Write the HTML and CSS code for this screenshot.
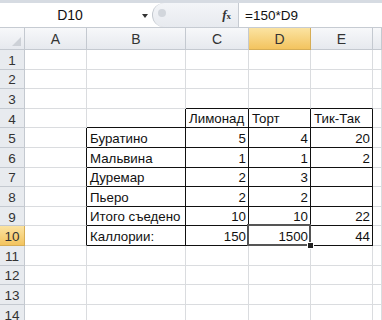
FILE: index.html
```html
<!DOCTYPE html>
<html lang="ru">
<head>
    <meta charset="UTF-8">
    <title>Книга1</title>
    <link rel="stylesheet" href="styles.css">
</head>
<body>

<div class="formula-bar">
    <div class="name-box">
        <span class="name">D10</span>
        <span class="arrow"></span>
    </div>
    <div class="fx-area">
        <span class="grip"></span>
        <span class="fx"><i>f</i><small>x</small></span>
    </div>
    <div class="formula">=150*D9</div>
</div>

<div class="sheet">
    <div class="hd corner"><span class="all"></span></div>
    <div class="hd">A</div>
    <div class="hd">B</div>
    <div class="hd">C</div>
    <div class="hd sel">D</div>
    <div class="hd">E</div>
    <div class="hd"></div>

    <div class="rh">1</div><div class="c"></div><div class="c"></div><div class="c"></div><div class="c"></div><div class="c"></div><div class="c"></div>
    <div class="rh">2</div><div class="c"></div><div class="c"></div><div class="c"></div><div class="c"></div><div class="c"></div><div class="c"></div>
    <div class="rh">3</div><div class="c"></div><div class="c"></div><div class="c bb"></div><div class="c bb"></div><div class="c bb"></div><div class="c"></div>

    <div class="rh">4</div><div class="c"></div><div class="c br bb"></div><div class="c br bb">Лимонад</div><div class="c br bb">Торт</div><div class="c br bb">Тик-Так</div><div class="c"></div>
    <div class="rh">5</div><div class="c br"></div><div class="c br bb">Буратино</div><div class="c br bb num">5</div><div class="c br bb num">4</div><div class="c br bb num">20</div><div class="c"></div>
    <div class="rh">6</div><div class="c br"></div><div class="c br bb">Мальвина</div><div class="c br bb num">1</div><div class="c br bb num">1</div><div class="c br bb num">2</div><div class="c"></div>
    <div class="rh">7</div><div class="c br"></div><div class="c br bb">Дуремар</div><div class="c br bb num">2</div><div class="c br bb num">3</div><div class="c br bb"></div><div class="c"></div>
    <div class="rh">8</div><div class="c br"></div><div class="c br bb">Пьеро</div><div class="c br bb num">2</div><div class="c br bb num">2</div><div class="c br bb"></div><div class="c"></div>
    <div class="rh">9</div><div class="c br"></div><div class="c br bb">Итого съедено</div><div class="c br bb num">10</div><div class="c br bb num">10</div><div class="c br bb num">22</div><div class="c"></div>
    <div class="rh sel">10</div><div class="c br"></div><div class="c br bb">Каллории:</div><div class="c br bb num">150</div><div class="c br bb num active">1500<span class="handle"></span></div><div class="c br bb num">44</div><div class="c"></div>

    <div class="rh">11</div><div class="c"></div><div class="c"></div><div class="c"></div><div class="c"></div><div class="c"></div><div class="c"></div>
    <div class="rh">12</div><div class="c"></div><div class="c"></div><div class="c"></div><div class="c"></div><div class="c"></div><div class="c"></div>
    <div class="rh">13</div><div class="c"></div><div class="c"></div><div class="c"></div><div class="c"></div><div class="c"></div><div class="c"></div>
    <div class="rh">14</div><div class="c"></div><div class="c"></div><div class="c"></div><div class="c"></div><div class="c"></div><div class="c"></div>
</div>

</body>
</html>
```

FILE: styles.css
```css
body {
    margin: 0;
    width: 382px;
    height: 320px;
    overflow: hidden;
    background: #fff;
    font-family: "Liberation Sans", Arial, sans-serif;
    font-size: 13px;
    color: #111;
}
.formula-bar {
    display: flex;
    height: 24px;
    border-top: 3px solid #d6dbe2;
    border-bottom: 1px solid #c6cbd2;
    background: #fff;
}
.name-box {
    width: 152px;
    display: flex;
    align-items: center;
    position: relative;
}
.name {
    flex: 1;
    text-align: center;
    font-size: 14px;
    padding-right: 2px;
}
.arrow {
    width: 0;
    height: 0;
    border-left: 3px solid transparent;
    border-right: 3px solid transparent;
    border-top: 4px solid #333;
    margin-right: 4px;
    margin-top: 2px;
}
.fx-area {
    width: 86px;
    display: flex;
    align-items: center;
    justify-content: space-between;
    background: linear-gradient(#f3f5f8, #e7eaef);
    border-left: 1px solid #c3c8cf;
    border-radius: 12px 0 0 12px;
    padding: 0 7px 0 5px;
    box-sizing: border-box;
}
.grip {
    width: 8px;
    height: 8px;
    border-radius: 50%;
    background: #d2d6dc;
    margin-top: -5px;
}
.fx {
    font-family: "Liberation Serif", serif;
    font-size: 13px;
    font-weight: bold;
    color: #333;
}
.fx small {
    font-size: 9px;
}
.formula {
    flex: 1;
    display: flex;
    align-items: center;
    padding-left: 6px;
    border-left: 1px solid #c6cbd2;
    font-size: 13.5px;
}
.sheet {
    display: grid;
    grid-template-columns: 25px 62px 99px 63px 62px 62px 1fr;
    grid-template-rows: 22px repeat(14, 19.6px);
}
.hd, .rh {
    background: linear-gradient(#f7f8fa, #e6e9ee);
    border-right: 1px solid #c4c9d0;
    border-bottom: 1px solid #c4c9d0;
    box-sizing: border-box;
    display: flex;
    align-items: center;
    justify-content: center;
    color: #333;
    font-size: 14px;
}
.rh {
    background: #e8ebef;
    padding-top: 2px;
    font-size: 13.5px;
}
.hd.sel, .rh.sel {
    background: linear-gradient(#fbe3a2, #f3c45f);
    border-color: #d6ad55;
}
.corner {
    position: relative;
}
.all {
    position: absolute;
    right: 3px;
    bottom: 3px;
    width: 0;
    height: 0;
    border-left: 9px solid transparent;
    border-bottom: 9px solid #cdd1d7;
}
.c {
    border-right: 1px solid #dadcdf;
    border-bottom: 1px solid #dadcdf;
    box-sizing: border-box;
    display: flex;
    align-items: flex-end;
    padding: 0 2px 1px 3px;
    white-space: nowrap;
    font-size: 13.3px;
}
.num {
    justify-content: flex-end;
}
.br {
    border-right-color: #111;
}
.bb {
    border-bottom-color: #111;
}
.active {
    position: relative;
}
.active::after {
    content: "";
    position: absolute;
    left: -2px;
    top: -2px;
    right: -1px;
    bottom: -1px;
    border: 2px solid #555;
}
.handle {
    position: absolute;
    right: -4px;
    bottom: -4px;
    width: 5px;
    height: 5px;
    background: #222;
    border: 1px solid #fff;
    z-index: 1;
}
```
